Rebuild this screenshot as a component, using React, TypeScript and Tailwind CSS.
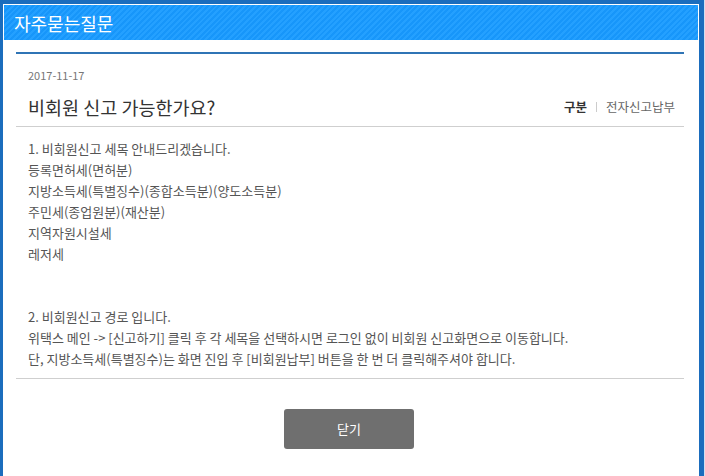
import React from "react";

const body1 = [
  "1. 비회원신고 세목 안내드리겠습니다.",
  "등록면허세(면허분)",
  "지방소득세(특별징수)(종합소득분)(양도소득분)",
  "주민세(종업원분)(재산분)",
  "지역자원시설세",
  "레저세",
];

const body2 = [
  "2. 비회원신고 경로 입니다.",
  "위택스 메인 -> [신고하기] 클릭 후 각 세목을 선택하시면 로그인 없이 비회원 신고화면으로 이동합니다.",
  "단, 지방소득세(특별징수)는 화면 진입 후 [비회원납부] 버튼을 한 번 더 클릭해주셔야 합니다.",
];

export default function App() {
  return (
    <div
      className="w-[705px] h-[476px] overflow-hidden bg-[#cfe0f2] pr-px"
      style={{ fontFamily: '"Noto Sans CJK KR", "Noto Sans", sans-serif' }}
    >
      <div className="h-full border-l-[3px] border-t-4 border-r-[5px] border-[#1b6dbd] bg-white p-px">
        <div className="h-[35px] flex items-center pl-[10px] bg-[repeating-linear-gradient(135deg,#1796fa_0px,#1796fa_2px,#24a0ff_2px,#24a0ff_4px)]">
          <span className="text-[18px] leading-none text-white">자주묻는질문</span>
        </div>

        <div className="pl-[12px] pr-[14px] pt-[12px]">
          <div className="h-[2px] bg-[#2f74b5]" />

          <div className="pl-[12px] pr-[9px] pt-[13px] pb-[7px]">
            <div className="text-[11px] leading-[16px] text-[#777]">2017-11-17</div>
            <div className="mt-[12px] flex items-center justify-between">
              <div className="text-[18.5px] leading-[24px] text-[#333]">비회원 신고 가능한가요?</div>
              <div className="flex items-center text-[12.5px] leading-[24px]">
                <span className="font-bold text-[#333]">구분</span>
                <span className="mx-[9px] h-[10px] w-px bg-[#ccc]" />
                <span className="text-[#666]">전자신고납부</span>
              </div>
            </div>
          </div>

          <div className="h-px bg-[#cfcfcf]" />

          <div className="px-[12px] pt-[11px] pb-[9px] text-[13px] leading-[21px] text-[#555]">
            {body1.map((t) => (
              <div key={t}>{t}</div>
            ))}
            <div className="h-[42px]" />
            {body2.map((t) => (
              <div key={t}>{t}</div>
            ))}
          </div>

          <div className="h-px bg-[#cfcfcf]" />

          <div className="flex justify-center pt-[30px] pr-[2px]">
            <button className="w-[130px] h-[40px] rounded-[3px] bg-[#6f6f6f] text-[13px] text-white">
              닫기
            </button>
          </div>
        </div>
      </div>
    </div>
  );
}
